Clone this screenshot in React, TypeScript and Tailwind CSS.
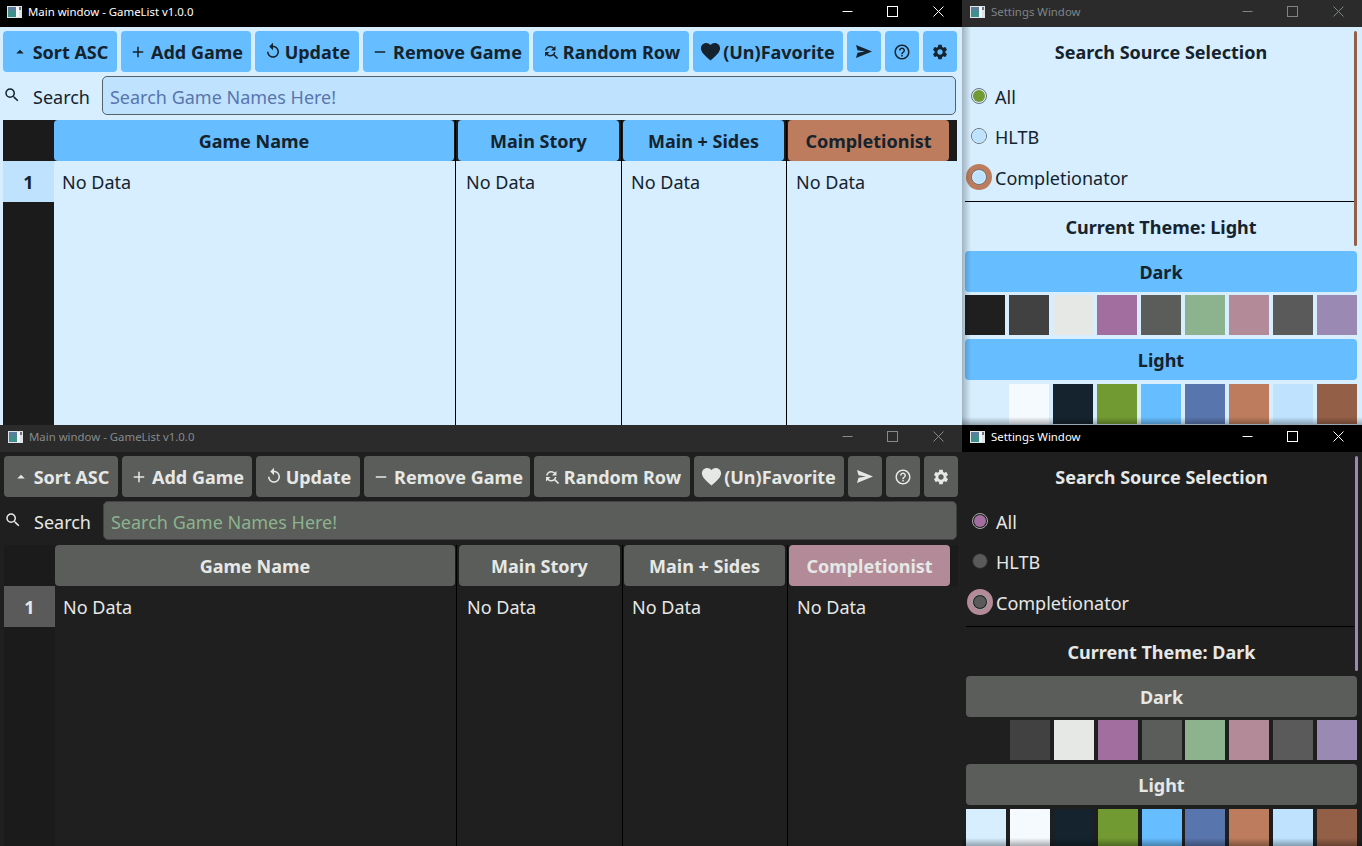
import React from "react";
import {
  MdAdd,
  MdArrowDropUp,
  MdFavorite,
  MdFindReplace,
  MdHelpOutline,
  MdRemove,
  MdReplay,
  MdSearch,
  MdSettings,
} from "react-icons/md";

type Theme = {
  name: string;
  shift: string;
  text: string;
  bg: string;
  btn: string;
  headDark: string;
  hover: string;
  rowHead: string;
  input: string;
  radioOff: string;
  radioOn: string;
  radioEdge: string;
  radioOnEdge: string;
  hoverRing: string;
  scroll: string;
  title: string;
  titleText: string;
  settingsTitle: string;
  settingsTitleText: string;
  divider: string;
};

const light: Theme = {
  name: "Light",
  shift: "pl-[3px]",
  text: "text-[#14232d]",
  bg: "bg-[#d6eeff]",
  btn: "bg-[#66bdff]",
  headDark: "bg-[#1b1b1b]",
  hover: "bg-[#bd7c5d]",
  rowHead: "bg-[#bfe3ff]",
  input: "bg-[#bfe3ff] border-[#56626b] placeholder:text-[#5975ad]",
  radioOff: "bg-[#bfe3ff]",
  radioOn: "bg-[#729a32]",
  radioEdge: "border-[#6b7275]",
  radioOnEdge: "border-[#6b7275]",
  hoverRing: "bg-[#bd7c5d]",
  scroll: "bg-[#945f47]",
  title: "bg-black",
  titleText: "text-white",
  settingsTitle: "bg-[#2b2b2b]",
  settingsTitleText: "text-[#7d8589]",
  divider: "bg-black",
};

const dark: Theme = {
  name: "Dark",
  shift: "pl-[4px]",
  text: "text-[#e6e8e6]",
  bg: "bg-[#1f1f1f]",
  btn: "bg-[#5b5d5a]",
  headDark: "bg-[#1b1b1b]",
  hover: "bg-[#b38a98]",
  rowHead: "bg-[#5a5a5a]",
  input: "bg-[#5b5d5a] border-[#414141] placeholder:text-[#8cb38d]",
  radioOff: "bg-[#5a5a5a]",
  radioOn: "bg-[#a26d9f]",
  radioEdge: "border-[#2c2c2c]",
  radioOnEdge: "border-[#a9a9a9]",
  hoverRing: "bg-[#b38a98]",
  scroll: "bg-[#9a8ab3]",
  title: "bg-[#2b2b2b]",
  titleText: "text-[#858a8c]",
  settingsTitle: "bg-black",
  settingsTitleText: "text-white",
  divider: "bg-black",
};

const darkSwatches = ["bg-[#1f1f1f]", "bg-[#414141]", "bg-[#e6e8e6]", "bg-[#a26d9f]", "bg-[#5b5d5a]", "bg-[#8cb38d]", "bg-[#b38a98]", "bg-[#5a5a5a]", "bg-[#9a8ab3]"];
const lightSwatches = ["bg-[#d6eeff]", "bg-[#f5faff]", "bg-[#14232d]", "bg-[#729a32]", "bg-[#66bdff]", "bg-[#5975ad]", "bg-[#bd7c5d]", "bg-[#bfe3ff]", "bg-[#945f47]"];

function AppIcon() {
  return (
    <svg width="15" height="12" viewBox="0 0 15 12" className="shrink-0">
      <rect width="15" height="12" fill="#dfe3e5" />
      <rect x="1" y="1" width="8" height="10" fill="#3f8f8c" />
      <rect x="1" y="1" width="8" height="4" fill="#5a7f9c" />
      <rect x="9" y="1" width="3" height="10" fill="#f4f6f7" />
      <rect x="12" y="1" width="2" height="3" fill="#6b7680" />
    </svg>
  );
}

function TitleBar({ title, bg, color, iconLeft }: { title: string; bg: string; color: string; iconLeft: string }) {
  return (
    <div className={`${bg} ${color} h-[27px] pb-[4px] shrink-0 flex items-center ${iconLeft} font-['Noto_Sans',sans-serif] text-[11.4px]`}>
      <AppIcon />
      <span className="ml-[6px] flex-1 leading-none">{title}</span>
      <svg width="11" height="11" viewBox="0 0 11 11" className="mr-[34px]" stroke="currentColor" fill="none">
        <path d="M0.5 5.5H10.5" />
      </svg>
      <svg width="11" height="11" viewBox="0 0 11 11" className="mr-[35px]" stroke="currentColor" fill="none">
        <rect x="0.5" y="0.5" width="10" height="10" />
      </svg>
      <svg width="11" height="11" viewBox="0 0 11 11" className="mr-[18px]" stroke="currentColor" fill="none">
        <path d="M0.5 0.5L10.5 10.5M10.5 0.5L0.5 10.5" />
      </svg>
    </div>
  );
}

function SendIcon() {
  return (
    <svg width="16" height="13" viewBox="0 0 16 13" fill="currentColor">
      <path d="M0 0L16 6.5L0 13L1.5 7.8L9 6.5L1.5 5.2Z" />
    </svg>
  );
}

const toolbar = [
  { label: "Sort ASC", w: "w-[114px]", icon: <MdArrowDropUp size={18} className="ml-[-1px] mr-[4px] -mt-[2px]" /> },
  { label: "Add Game", w: "w-[130px]", icon: <MdAdd size={18} className="mr-[4px] -mt-[2px]" /> },
  { label: "Update", w: "w-[104px]", icon: <MdReplay size={18} className="mr-[3px] -mt-[3px]" /> },
  { label: "Remove Game", w: "w-[166px]", icon: <MdRemove size={18} className="ml-[1px] mr-[4px] -mt-[2px]" /> },
  { label: "Random Row", w: "w-[156px]", icon: <MdFindReplace size={18} className="mr-[3px] -mt-[2px]" /> },
  { label: "(Un)Favorite", w: "w-[150px]", icon: <MdFavorite size={23} className="-ml-[2px] mr-[1px] -mt-[2px]" /> },
];

function Toolbar({ t }: { t: Theme }) {
  return (
    <div className="flex gap-[4px] h-[41px] mt-[4px]">
      {toolbar.map((b) => (
        <div key={b.label} className={`${b.w} ${t.btn} rounded-[4px] flex items-center justify-center pt-[2px] text-[18px] font-bold`}>
          {b.icon}
          <span>{b.label}</span>
        </div>
      ))}
      <div className={`w-[34px] ${t.btn} rounded-[4px] flex items-center justify-center`}>
        <SendIcon />
      </div>
      <div className={`w-[34px] ${t.btn} rounded-[4px] flex items-center justify-center`}>
        <MdHelpOutline size={18} />
      </div>
      <div className={`w-[34px] ${t.btn} rounded-[4px] flex items-center justify-center`}>
        <MdSettings size={18} />
      </div>
    </div>
  );
}

const columns = [
  { label: "Game Name", w: "w-[402px]", head: "w-[400px]", pad: "pl-[8px]", line: true },
  { label: "Main Story", w: "w-[166px]", head: "w-[161px] ml-[2px]", pad: "pl-[10px]", line: true },
  { label: "Main + Sides", w: "w-[165px]", head: "w-[161px] ml-[1px]", pad: "pl-[9px]", line: true },
  { label: "Completionist", w: "w-[170px]", head: "w-[161px] ml-[1px]", pad: "pl-[9px]", line: false },
];

function MainWindow({ t, title }: { t: Theme; title: string }) {
  return (
    <div className={`${t.bg} ${t.text} h-full flex flex-col overflow-hidden font-['Noto_Sans',sans-serif]`}>
      <TitleBar title={title} bg={t.title} color={t.titleText} iconLeft={t.name === "Light" ? "pl-[7px]" : "pl-[8px]"} />
      <div className={`flex-1 min-h-0 flex flex-col ${t.shift}`}>
        <Toolbar t={t} />
        <div className="flex items-center h-[39px] mt-[4px] w-[953px]">
          <MdSearch size={18} className="-mt-[2px]" />
          <span className="ml-[12px] mt-[3px] text-[18px]">Search</span>
          <input
            readOnly
            placeholder="Search Game Names Here!"
            className={`${t.input} ml-[12px] flex-1 h-[39px] border-[1.5px] rounded-[5px] pl-[7px] pr-[6px] pt-[2px] text-[18px] outline-none`}
          />
        </div>
        <div className="flex flex-1 min-h-0 mt-[5px] w-[954px]">
          <div className={`w-[51px] flex flex-col ${t.headDark}`}>
            <div className="h-[41px] shrink-0" />
            <div className={`h-[41px] shrink-0 pt-[2px] ${t.rowHead} flex items-center justify-center text-[18px] font-bold`}>1</div>
          </div>
          {columns.map((c) => (
            <div key={c.label} className={`${c.w} flex flex-col ${c.line ? "border-r border-black" : ""}`}>
              <div className={`h-[41px] shrink-0 flex ${t.headDark}`}>
                <div
                  className={`${c.head} ${c.label === "Completionist" ? t.hover : t.btn} rounded-[4px] flex items-center justify-center pt-[2px] text-[18px] font-bold`}
                >
                  {c.label}
                </div>
              </div>
              <div className={`h-[41px] pt-[2px] flex items-center text-[18px] ${c.pad}`}>No Data</div>
            </div>
          ))}
        </div>
      </div>
    </div>
  );
}

function Radio({ t, label, checked, hover, row }: { t: Theme; label: string; checked?: boolean; hover?: boolean; row: string }) {
  const edge = checked || hover ? t.radioOnEdge : t.radioEdge;
  return (
    <div className={`flex items-center ${row}`}>
      <div className={`w-[26px] h-[26px] ml-[1px] -mt-[2px] rounded-full flex items-center justify-center ${hover ? t.hoverRing : ""}`}>
        <div className={`w-[16px] h-[16px] rounded-full border ${edge} flex items-center justify-center ${hover ? t.bg : ""}`}>
          <div className={`${checked || hover ? "w-[12px] h-[12px]" : "w-[14px] h-[14px]"} rounded-full ${checked ? t.radioOn : t.radioOff}`} />
        </div>
      </div>
      <span className="ml-[3px] text-[18px]">{label}</span>
    </div>
  );
}

function Swatches({ colors }: { colors: string[] }) {
  return (
    <div className="flex justify-between">
      {colors.map((c) => (
        <div key={c} className={`w-[40px] h-[40px] ${c}`} />
      ))}
    </div>
  );
}

function SettingsWindow({ t }: { t: Theme }) {
  const isLight = t.name === "Light";
  return (
    <div className={`${t.bg} ${t.text} h-full flex flex-col overflow-hidden relative font-['Noto_Sans',sans-serif]`}>
      <TitleBar title="Settings Window" bg={t.settingsTitle} color={t.settingsTitleText} iconLeft="pl-[8px]" />
      <div className={`flex flex-col w-[395px] ${t.shift}`}>
        <div className="h-[41px] mt-[4px] pt-[2px] flex items-center justify-center text-[18px] font-bold">Search Source Selection</div>
        <Radio t={t} label="All" checked row="h-[40px] mt-[5px]" />
        <Radio t={t} label="HLTB" row="h-[40px]" />
        <Radio t={t} label="Completionator" hover row="h-[40px] mt-[1px]" />
        <div className={`${t.divider} h-[1px] mt-[3px] mr-[3px]`} />
        <div className="h-[41px] mt-[5px] flex items-center justify-center text-[18px] font-bold">Current Theme: {t.name}</div>
        <div className={`${t.btn} h-[41px] mt-[3px] pt-[2px] rounded-[4px] flex items-center justify-center text-[18px] font-bold`}>Dark</div>
        <div className="mt-[3px]">
          <Swatches colors={darkSwatches} />
        </div>
        <div className={`${t.btn} h-[41px] mt-[4px] pt-[2px] rounded-[4px] flex items-center justify-center text-[18px] font-bold`}>Light</div>
        <div className="mt-[4px]">
          <Swatches colors={lightSwatches} />
        </div>
      </div>
      {/* scrollbar handle sits over the content */}
      <div className={`absolute top-[31px] h-[215px] w-[3px] rounded-full ${t.scroll} ${isLight ? "left-[392px]" : "left-[393px]"}`} />
      {/* edge shadow of the window above */}
      {isLight && <div className="absolute left-0 top-[27px] bottom-0 w-[9px] bg-gradient-to-r from-[#00000040] to-transparent" />}
      <div className="absolute left-0 right-0 bottom-0 h-[8px] bg-gradient-to-t from-[#00000050] to-transparent" />
    </div>
  );
}

export default function App() {
  return (
    <div className="w-[1362px] h-[846px] overflow-hidden grid grid-cols-[962px_400px] grid-rows-[425px_421px] bg-black">
      <MainWindow t={light} title="Main window - GameList v1.0.0" />
      <SettingsWindow t={light} />
      <MainWindow t={dark} title="Main window - GameList v1.0.0" />
      <SettingsWindow t={dark} />
    </div>
  );
}
